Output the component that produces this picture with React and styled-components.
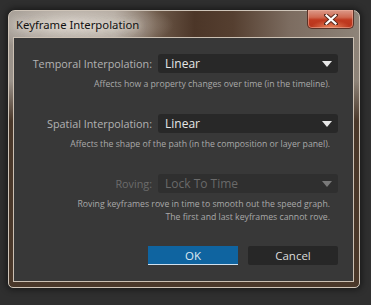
import React from "react";
import styled, { createGlobalStyle } from "styled-components";

const GlobalStyle = createGlobalStyle`
  html, body { margin: 0; padding: 0; background: #2e2e2e; }
  body { font-family: "Open Sans", "Noto Sans", "DejaVu Sans", sans-serif; }
  * { box-sizing: border-box; }
`;

const Page = styled.div`
  width: 371px;
  height: 305px;
  padding: 10px 0 0 8px;
  background: #2f2f2f;
`;

const Window = styled.div`
  width: 352px;
  height: 278px;
  display: flex;
  flex-direction: column;
  padding: 0 5px 5px 4px;
  border: 1px solid #cfc5b9;
  border-radius: 7px 7px 5px 5px;
  box-shadow: 0 0 6px 2px rgba(0, 0, 0, 0.45);
  background:
    linear-gradient(to bottom, rgba(74, 56, 42, 0) 0px, rgba(74, 56, 42, 0) 70px, rgba(74, 56, 42, 1) 110px),
    radial-gradient(ellipse 100px 26px at 65px 14px, rgba(225, 218, 210, 0.9), rgba(225, 218, 210, 0) 100%),
    linear-gradient(to right, #9a928a 0%, #a49a90 30%, #6e5a4a 42%, #4c3628 53%, #553f30 64%, #7c6c60 80%, #8e8479 100%);
`;

const TitleBar = styled.div`
  height: 26px;
  display: flex;
  align-items: flex-start;
  justify-content: space-between;
`;

const Title = styled.div`
  margin-top: 5px;
  padding-left: 3px;
  font-family: "Noto Sans", "Open Sans", sans-serif;
  font-size: 11.3px;
  line-height: 18px;
  color: #111;
  text-shadow: 0 0 6px rgba(235, 228, 220, 0.9), 0 0 10px rgba(235, 228, 220, 0.7);
`;

const CloseButton = styled.div`
  width: 47px;
  height: 19px;
  margin-top: -1px;
  display: flex;
  align-items: center;
  justify-content: center;
  border: 1px solid #5a3328;
  border-top: none;
  border-radius: 0 0 5px 5px;
  box-shadow: inset 0 0 0 1px rgba(240, 180, 160, 0.55);
  background:
    radial-gradient(ellipse 20px 8px at 50% 100%, rgba(255, 170, 120, 0.7), rgba(255, 170, 120, 0) 100%),
    linear-gradient(to bottom, #dc9a8a 0%, #cf6a52 40%, #c03a20 55%, #b8341c 100%);
`;

const Content = styled.div`
  flex: 1;
  background: #383838;
  border: 1px solid #cbc0b3;
  padding-top: 16px;
  display: flex;
  flex-direction: column;
`;

const Row = styled.div`
  display: grid;
  grid-template-columns: 138px 180px;
  column-gap: 6px;
  align-items: center;
  height: 19px;
  margin-top: ${(p) => (p.$first ? 0 : 23)}px;
`;

const Label = styled.div`
  text-align: right;
  font-size: 10.8px;
  color: ${(p) => (p.$disabled ? "#6c6c6c" : "#b3b3b3")};
`;

const Select = styled.div`
  height: 19px;
  display: flex;
  align-items: center;
  justify-content: space-between;
  padding: 0 6px 0 7px;
  background: ${(p) => (p.$disabled ? "#2f2f2f" : "#282828")};
  border-radius: 3px;
  font-size: 12px;
  color: ${(p) => (p.$disabled ? "#6a6a6a" : "#e6e6e6")};
`;

const Arrow = styled.span`
  width: 0;
  height: 0;
  border-left: 5px solid transparent;
  border-right: 5px solid transparent;
  border-top: 6px solid ${(p) => (p.$disabled ? "#7a7a7a" : "#e8e8e8")};
`;

const Desc = styled.div`
  margin-top: 5px;
  padding-right: 23px;
  text-align: right;
  font-size: 8.7px;
  line-height: 13px;
  color: #a9a9a9;
`;

const Buttons = styled.div`
  margin-top: 22px;
  display: flex;
  justify-content: flex-end;
  gap: 10px;
  padding-right: 15px;
`;

const Button = styled.div`
  width: 90px;
  height: 19px;
  display: flex;
  align-items: center;
  justify-content: center;
  font-size: 11.5px;
  color: ${(p) => (p.$primary ? "#dfe9f2" : "#dcdcdc")};
  background: ${(p) => (p.$primary ? "#0f64a0" : "#272727")};
  border-bottom: ${(p) => (p.$primary ? "1px solid #cfe0ee" : "none")};
  border-radius: ${(p) => (p.$primary ? "0" : "2px")};
`;

function CloseX() {
  return (
    <svg width="14" height="11" viewBox="0 0 14 11">
      <path d="M2 1 L12 10 M12 1 L2 10" stroke="#5a2a1e" strokeWidth="4" strokeLinecap="square" />
      <path d="M2.5 1.5 L11.5 9.5 M11.5 1.5 L2.5 9.5" stroke="#ffffff" strokeWidth="2.2" strokeLinecap="square" />
    </svg>
  );
}

function Field({ label, value, disabled, first }) {
  return (
    <Row $first={first}>
      <Label $disabled={disabled}>{label}</Label>
      <Select $disabled={disabled}>
        <span>{value}</span>
        <Arrow $disabled={disabled} />
      </Select>
    </Row>
  );
}

export default function App() {
  return (
    <>
      <GlobalStyle />
      <Page>
        <Window>
          <TitleBar>
            <Title>Keyframe Interpolation</Title>
            <CloseButton>
              <CloseX />
            </CloseButton>
          </TitleBar>
          <Content>
            <Field first label="Temporal Interpolation:" value="Linear" />
            <Desc>Affects how a property changes over time (in the timeline).</Desc>
            <Field label="Spatial Interpolation:" value="Linear" />
            <Desc>Affects the shape of the path (in the composition or layer panel).</Desc>
            <Field disabled label="Roving:" value="Lock To Time" />
            <Desc>
              Roving keyframes rove in time to smooth out the speed graph.
              <br />
              The first and last keyframes cannot rove.
            </Desc>
            <Buttons>
              <Button $primary>OK</Button>
              <Button>Cancel</Button>
            </Buttons>
          </Content>
        </Window>
      </Page>
    </>
  );
}
